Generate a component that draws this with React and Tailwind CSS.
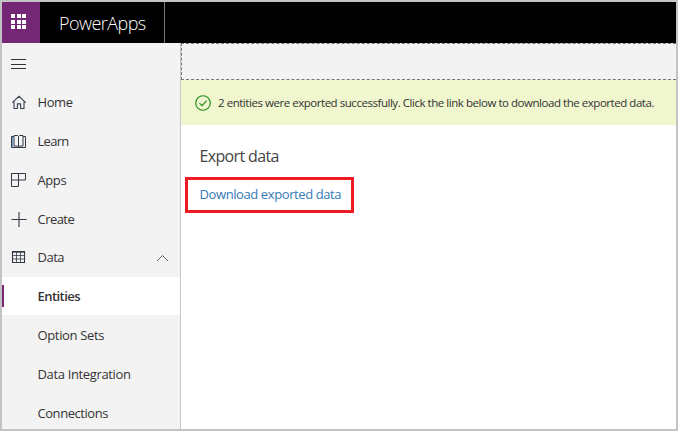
const HomeIcon = () => (
  <svg width="16" height="16" viewBox="0 0 16 16" fill="none" stroke="#3b3f52" strokeWidth="1.1">
    <path d="M1.300 7.700 8 1.300l6.700 6.400M3 6.300v7.200h3.400V8.900h3.200v4.600H13V6.300" />
  </svg>
);

const LearnIcon = () => (
  <svg width="16" height="16" viewBox="0 0 16 16" fill="none" stroke="#333845" strokeWidth="1">
    <path d="M3 2.500H.5v11h14v-11H12" />
    <path d="M7.500 13V2.500l-1-1H3v10.500h3.500l1 1 1-1H12V1.500H8.500l-1 1" />
    <path d="M1.700 3v10" stroke="#3f86c4" strokeWidth=".9" />
  </svg>
);

const AppsIcon = () => (
  <svg width="16" height="16" viewBox="0 0 16 16" fill="none" stroke="#333845" strokeWidth="1">
    <path d="M.5 .5h14v6.500H.5zM.5 .5v13h7V.5" />
  </svg>
);

const CreateIcon = () => (
  <svg width="16" height="16" viewBox="0 0 16 16" fill="none" stroke="#333845" strokeWidth="1.100">
    <path d="M.5 7.500h15M8 0v15" />
  </svg>
);

const DataIcon = () => (
  <svg width="16" height="16" viewBox="0 0 16 16" fill="none" stroke="#333845">
    <path d="M1.500 1.500h12v11h-12z" strokeWidth="1.100" />
    <path d="M1 2h13" strokeWidth="1.300" />
    <path d="M1 5.500h13M1 9h13" strokeWidth=".8" />
    <path d="M5.500 2v11M9.500 2v11" strokeWidth=".8" />
  </svg>
);

const mainItems = [
  { label: "Home", icon: HomeIcon, tracking: "tracking-[-0.4px]" },
  { label: "Learn", icon: LearnIcon, tracking: "tracking-[-0.7px]" },
  { label: "Apps", icon: AppsIcon, tracking: "tracking-[-0.4px]" },
  { label: "Create", icon: CreateIcon, tracking: "tracking-[-0.55px]" },
];

const subItems = [
  { label: "Option Sets", tracking: "tracking-[-0.35px]" },
  { label: "Data Integration", tracking: "tracking-[-0.35px]" },
  { label: "Connections", tracking: "tracking-[-0.45px]" },
];

export default function App() {
  return (
    <div className="flex h-[431px] w-[678px] flex-col overflow-hidden border-2 border-[#c3c3c3] bg-white font-['Open_Sans','Noto_Sans',sans-serif] text-[13px] text-[#333]">
      <header className="flex h-[41px] shrink-0 bg-black">
        <div className="flex w-[38px] items-start bg-[#742774] pt-3 pl-[9px]">
          <div className="grid grid-cols-3 gap-[1.5px]">
            {Array.from({ length: 9 }, (_, i) => (
              <span key={i} className="size-[4px] bg-white" />
            ))}
          </div>
        </div>
        <div className="flex w-[125px] items-center border-r border-[#777] pl-[19px] text-white">
          <span className="text-[18px] leading-6 font-light tracking-[-0.55px]">PowerApps</span>
        </div>
      </header>

      <div className="flex min-h-0 flex-1">
        <nav className="w-[179px] shrink-0 border-r border-[#c8c8c8] bg-[#f3f3f3]">
          <div className="flex h-10 flex-col gap-[3.500px] pt-[16px] pl-[9px]">
            <span className="h-px w-[15px] bg-[#333]" />
            <span className="h-px w-[15px] bg-[#333]" />
            <span className="h-px w-[15px] bg-[#333]" />
          </div>
          {mainItems.map(({ label, icon: Icon, tracking }) => (
            <div key={label} className="flex h-[39px] items-center pl-[9px]">
              <Icon />
              <span className={`ml-[10.5px] ${tracking}`}>{label}</span>
            </div>
          ))}
          <div className="flex h-[38px] items-center pr-[11px] pl-[9px]">
            <DataIcon />
            <span className="ml-[10.5px] tracking-[-0.5px]">Data</span>
            <svg className="ml-auto" width="13" height="8" viewBox="0 0 13 8" fill="none" stroke="#666">
              <path d="M1 7l5.500-5.500L12 7" />
            </svg>
          </div>
          <div className="flex h-[38px] items-center bg-white">
            <span className="h-[22px] w-[2px] bg-[#742774]" />
            <span className="ml-[33.5px] pt-[2px] font-semibold tracking-[-0.55px]">Entities</span>
          </div>
          {subItems.map(({ label, tracking }) => (
            <div key={label} className="flex h-[39px] items-center pt-[2px] pl-[35.5px]">
              <span className={tracking}>{label}</span>
            </div>
          ))}
        </nav>

        <main className="min-w-0 flex-1">
          <div className="h-[37px] border-y border-l border-dashed border-[#777] bg-[#f3f3f3]" />
          <div className="flex h-[45px] items-center bg-[#f0f6ce] pl-[14px]">
            <svg className="shrink-0" width="16" height="16" viewBox="0 0 16 16" fill="none" stroke="#188a18" strokeWidth="1.100">
              <circle cx="8" cy="8" r="7.300" />
              <path d="M4.500 8.200 7 10.600l4.700-5" />
            </svg>
            <span className="ml-[7px] text-[11.5px] whitespace-nowrap tracking-[-0.46px]">
              2 entities were exported successfully. Click the link below to download the exported data.
            </span>
          </div>
          <h1 className="mt-[19px] ml-[18.5px] text-[16px] leading-[24px] tracking-[-0.65px] text-[#444]">Export data</h1>
          <div className="mt-[9px] ml-[4px] flex h-9 w-[169px] items-center border-[3px] border-[#ed1c24] pl-[11.5px]">
            <a className="text-[13px] tracking-[-0.4px] whitespace-nowrap text-[#337ab7]">Download exported data</a>
          </div>
        </main>
      </div>
    </div>
  );
}
